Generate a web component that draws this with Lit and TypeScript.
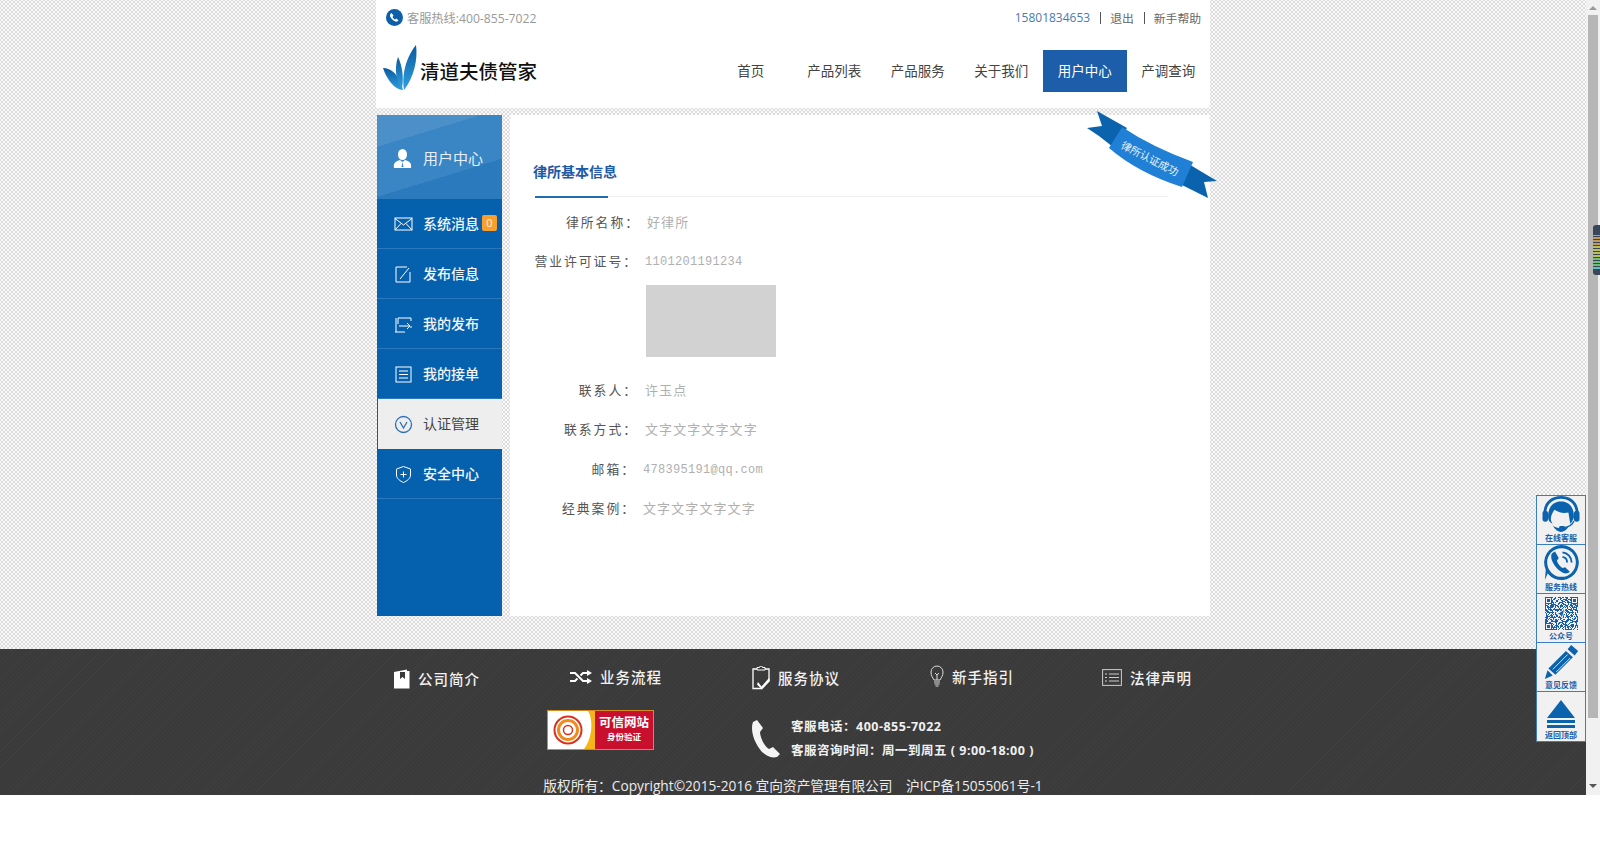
import { LitElement, html, css, svg } from 'lit';
import { customElement } from 'lit/decorators.js';

const SANS = css`"Open Sans", "Noto Sans CJK SC", sans-serif`;

const menuIcons = {
  mail: svg`<rect x="1" y="3" width="17" height="12" fill="none" stroke="#fff" stroke-width="1"/><path d="M1 3.500l8.500 6.500L18 3.500M1 15l6-6.500M18 15l-6-6.500" fill="none" stroke="#fff"/>`,
  edit: svg`<path d="M13 2H2v15h14V7" fill="none" stroke="#fff"/><path d="M6 14L15 3" stroke="#fff"/>`,
  send: svg`<path d="M4 9V3h13v3M17 11v2M1 17h10M2 3v14" fill="none" stroke="#fff"/><path d="M5 11h11M13 8l3 3-3 3" fill="none" stroke="#fff"/>`,
  list: svg`<rect x="2" y="2" width="15" height="15" fill="none" stroke="#fff"/><path d="M5 6h9M5 9.500h9M5 13h9" stroke="#fff"/>`,
  verify: svg`<circle cx="9.500" cy="9.500" r="8" fill="none" stroke="#2b6fb3" stroke-width="1.300"/><path d="M6 7l3.500 6L13 7" fill="none" stroke="#2b6fb3" stroke-width="1.300"/>`,
  shield: svg`<path d="M9.500 1.500l7 2.500v6c0 3.500-3.500 6-7 7.500-3.500-1.500-7-4-7-7.500V4z" fill="none" stroke="#fff"/><path d="M9.500 6.500v6M6.500 9.500h6" stroke="#fff"/>`,
};

const menu = [
  { name: '系统消息', icon: menuIcons.mail, badge: '0' },
  { name: '发布信息', icon: menuIcons.edit },
  { name: '我的发布', icon: menuIcons.send },
  { name: '我的接单', icon: menuIcons.list },
  { name: '认证管理', icon: menuIcons.verify, active: true },
  { name: '安全中心', icon: menuIcons.shield },
];

const nav = ['首页', '产品列表', '产品服务', '关于我们', '用户中心', '产调查询'];

// shift keeps the slightly uneven left edge of the original form
const rows = [
  { label: '律所名称：', value: '好律所', shift: 2 },
  { label: '营业许可证号：', value: '1101201191234', shift: 0, mono: true, image: true },
  { label: '联系人：', value: '许玉点', shift: 0 },
  { label: '联系方式：', value: '文字文字文字文字', shift: 0 },
  { label: '邮箱：', value: '478395191@qq.com', shift: -2, mono: true },
  { label: '经典案例：', value: '文字文字文字文字', shift: -2 },
];

const footerLinks = [
  {
    name: '公司简介',
    w: 17,
    h: 20,
    icon: svg`<path d="M1 3l13-2.500V2h2.500v17.500H1z" fill="#fff"/><path d="M7 3v7l2.500-2L12 10V3z" fill="#3a3a3a"/>`,
  },
  {
    name: '业务流程',
    w: 22,
    h: 14,
    icon: svg`<path d="M0 3h5l8 8h5M0 11h5l2.500-2.500M10.500 5.500L13 3h5" fill="none" stroke="#fff" stroke-width="2"/><path d="M17 0l5 3-5 3zM17 8l5 3-5 3z" fill="#fff"/>`,
  },
  {
    name: '服务协议',
    w: 18,
    h: 24,
    icon: svg`<path d="M5 3H1v19.500h9M13 3h4v11" fill="none" stroke="#fff" stroke-width="1.300"/><path d="M5 4V1.500h2.500a1.500 1.500 0 0 1 3 0H13V4z" fill="none" stroke="#fff"/><path d="M6 16l3.500 4.500L17 12l1 3-8 8.500-5-5z" fill="#fff"/>`,
  },
  {
    name: '新手指引',
    w: 14,
    h: 23,
    icon: svg`<path d="M4 15C2.500 12 1 11 1 7a6 6 0 0 1 12 0c0 4-1.500 5-3 8z" fill="none" stroke="#ddd"/><path d="M5 8l2 2 2-2M7 10v5M4 17h6M4.500 19h5M5.500 21h3" fill="none" stroke="#ddd"/>`,
  },
  {
    name: '法律声明',
    w: 20,
    h: 17,
    icon: svg`<rect x=".6" y=".6" width="18.800" height="15.800" fill="none" stroke="#ccc"/><path d="M3 5h2M7 5h10M3 8.500h2M7 8.500h10M3 12h2M7 12h10" stroke="#ccc"/>`,
  },
];

// fake qr modules, only the look of the block matters
const qrCells = () => {
  const cells = [];
  const finder = (x: number, y: number) =>
    (x < 7 && y < 7) || (x > 25 && y < 7) || (x < 7 && y > 25);
  for (let y = 0; y < 33; y++) {
    for (let x = 0; x < 33; x++) {
      if (finder(x, y)) continue;
      if ((x * 7 + y * 13 + ((x * y) % 5) * 3 + ((x ^ y) % 3)) % 5 < 3) {
        cells.push(svg`<rect x=${x} y=${y} width="1" height="1"/>`);
      }
    }
  }
  return cells;
};

const finderMark = (x: number, y: number) => svg`
  <rect x=${x + 0.5} y=${y + 0.5} width="6" height="6" fill="none" stroke="#1a5ea8"/>
  <rect x=${x + 2} y=${y + 2} width="3" height="3"/>`;

const sideTools = [
  {
    name: '在线客服',
    icon: svg`<svg class="tool-icon" viewBox="0 0 40 40" width="40" height="37" fill="#0b62ad">
      <path d="M1 20C1 8 9 1 20 1s19 7 19 19h-3C36 10 29 4 20 4S4 10 4 20z"/>
      <rect x="0" y="17" width="6" height="12" rx="3"/><rect x="34" y="17" width="6" height="12" rx="3"/>
      <path d="M6 24C6 12 12 7 20 7s14 5 14 17c-1 3-2 5-4 7l-2-12c-6 1-11 0-15-3-2 3-4 6-4 10 0 2 1 4 2 5-3-1-5-4-5-7z"/>
      <path d="M11 33c5 4 13 4 18 0-3 5-6 7-9 7s-6-2-9-7z"/>
      <path d="M34 28c-2 5-6 7-12 7" fill="none" stroke="#0b62ad" stroke-width="1.500"/>
      <rect x="18" y="33.500" width="6" height="3" rx="1.500"/>
    </svg>`,
  },
  {
    name: '服务热线',
    icon: svg`<svg class="tool-icon" viewBox="0 0 40 40" width="37" height="37" fill="#0b62ad">
      <path d="M20 1a19 19 0 1 1-15 31L2 39l1-11A19 19 0 0 1 20 1z"/>
      <circle cx="20" cy="20" r="15.500" fill="#f1f1f1"/>
      <path d="M13 8l4 7-2 3c1 3 3 6 6 8l3-1 5 5c-3 3-7 2-11-1-6-5-10-12-9-17 0-2 2-3 4-4z"/>
      <path d="M21 9a11 11 0 0 1 10 11M21 14a6 6 0 0 1 5 6" fill="none" stroke="#0b62ad" stroke-width="2"/>
    </svg>`,
  },
  {
    name: '公众号',
    icon: svg`<svg class="tool-icon" viewBox="0 0 33 33" width="33" height="33" fill="#1a5ea8">
      ${qrCells()}${finderMark(0, 0)}${finderMark(26, 0)}${finderMark(0, 26)}
      <path d="M20 12l-3 9-2-3-3-1z" fill="#1a5ea8" stroke="#f1f1f1"/>
    </svg>`,
  },
  {
    name: '意见反馈',
    icon: svg`<svg class="tool-icon" viewBox="0 0 40 40" width="35" height="35" fill="#0b62ad">
      <path d="M31 1l8 7-4 5-8-7zM25 8l8 7-20 20-8-7z"/>
      <path d="M4 30l6 6-9 4z"/>
      <path d="M10 29l17-17M14 32l16-16" stroke="#f1f1f1" stroke-width="1"/>
    </svg>`,
  },
  {
    name: '返回顶部',
    icon: svg`<svg class="tool-icon" viewBox="0 0 30 30" width="30" height="30" fill="#0b62ad">
      <path d="M15 1l14 18H1z"/><rect x="1" y="21" width="28" height="3"/><rect x="1" y="26" width="28" height="3"/>
    </svg>`,
  },
];

@customElement('app-root')
export class AppRoot extends LitElement {
  static styles = css`
    :host {
      display: block;
      height: 866px;
      background: #fff;
      overflow: hidden;
      font-family: ${SANS};
    }
    .shell {
      display: flex;
      height: 795px;
      position: relative;
    }
    .page {
      flex: 1;
      min-width: 0;
      overflow: hidden;
      background: radial-gradient(#dcdcdc 0.8px, transparent 1.1px) 0 0 / 4px 4px,
        radial-gradient(#dcdcdc 0.8px, transparent 1.1px) 2px 2px / 4px 4px, #fafafa;
    }
    .scrollbar {
      width: 14px;
      background: #f1f1f1;
      position: relative;
    }
    .thumb {
      position: absolute;
      left: 2px;
      width: 10px;
      top: 15px;
      height: 703px;
      background: #b6b6b6;
    }
    .arrow {
      position: absolute;
      left: 3px;
      width: 0;
      height: 0;
      border-left: 4px solid transparent;
      border-right: 4px solid transparent;
    }
    .arrow.up {
      top: 6px;
      border-bottom: 4px solid #999;
    }
    .arrow.down {
      bottom: 7px;
      border-top: 4px solid #555;
    }
    .meter {
      position: absolute;
      top: 225px;
      right: 0;
      width: 7px;
      height: 50px;
      border-radius: 3px 0 0 3px;
      background: repeating-linear-gradient(#0000 0 2px, #3c4656 2px 3px),
        linear-gradient(#39475c 0 20%, #c09a5a 20% 40%, #b9c05a 40% 65%, #6cc07a 65% 85%, #5cc0c8 85% 90%, #39475c 90%);
    }

    .wrap {
      width: 834px;
      margin: 0 auto;
    }
    .header {
      height: 108px;
      background: #fff;
    }
    .topbar {
      display: flex;
      justify-content: space-between;
      align-items: center;
      height: 35px;
      padding: 0 9px 0 10px;
      font-size: 12.200px;
      color: #999;
    }
    .hotline {
      display: flex;
      align-items: center;
      gap: 4px;
    }
    .account {
      display: flex;
      align-items: center;
      color: #666;
      font-size: 11.800px;
    }
    .account .phone {
      color: #4a7bb0;
      font-size: 12px;
    }
    .account .sep {
      width: 1px;
      height: 12px;
      background: #555;
      margin: 0 9px 0 10px;
    }
    .brand-row {
      display: flex;
      justify-content: space-between;
      align-items: flex-start;
      padding-left: 6px;
    }
    .logo {
      display: flex;
      align-items: center;
      padding-top: 5px;
      gap: 2px;
      color: #111;
      font-size: 19.500px;
      font-weight: 500;
      line-height: 46px;
    }
    .logo span {
      margin-top: 9px;
    }
    .nav {
      display: flex;
      margin-top: 15px;
    }
    .nav a {
      width: 83.500px;
      height: 42px;
      line-height: 42px;
      text-align: center;
      font-size: 13.500px;
      color: #444;
    }
    .nav a.active {
      background: #1c5ea9;
      color: #fff;
    }

    .body {
      display: flex;
      gap: 8px;
      margin-top: 7px;
      padding-left: 1px;
      height: 501px;
    }
    .sidebar {
      width: 125px;
      background: #0560ad;
      flex: none;
    }
    .side-head {
      height: 84px;
      display: flex;
      align-items: center;
      gap: 11px;
      padding-left: 16px;
      box-sizing: border-box;
      color: #e6f0f8;
      font-size: 15px;
      background: linear-gradient(163deg, #4c90ca 0 26%, #3a85c4 26% 67%, #2a7abd 67%);
    }
    .side-head svg {
      margin-top: 3px;
    }
    .side-item {
      height: 50px;
      box-sizing: border-box;
      border-bottom: 1px solid #2a78bd;
      display: flex;
      align-items: center;
      gap: 10px;
      padding: 0 0 2px 17px;
      color: #f2f6fa;
      font-size: 14px;
      font-weight: 500;
    }
    .side-item svg {
      margin-top: 3px;
    }
    .side-item.active {
      background: #eeeeee;
      color: #444;
      margin-left: 1px;
      padding-left: 16px;
      border-bottom: none;
      font-weight: 400;
    }
    .badge {
      width: 15px;
      height: 16px;
      line-height: 16px;
      margin-left: -7px;
      background: #f9a02c;
      border-radius: 2px;
      text-align: center;
      font-size: 11px;
      font-weight: 400;
    }

    .main {
      flex: 1;
      position: relative;
      background: #fff;
    }
    .ribbon {
      position: absolute;
      top: -7px;
      right: -10px;
    }
    .title-line {
      margin: 45px 42px 0 25px;
      height: 36px;
      border-bottom: 1px solid #eeeeee;
    }
    .title {
      display: inline-block;
      box-sizing: border-box;
      width: 73px;
      height: 36px;
      border-bottom: 2px solid #1f6cb0;
      white-space: nowrap;
      font-size: 14px;
      line-height: 20px;
      font-weight: 700;
      color: #1f5aa8;
    }
    .title span {
      margin-left: -2px;
    }
    .form {
      padding-top: 12px;
      font-family: "Liberation Serif", "Noto Sans CJK SC", serif;
      letter-spacing: 2px;
    }
    .row {
      display: flex;
      align-items: center;
      height: 24px;
      margin-bottom: 15.300px;
      font-size: 13px;
    }
    .row label {
      width: 128px;
      text-align: right;
      color: #555;
      flex: none;
      font-size: 12.800px;
    }
    .row .value {
      margin-left: 7px;
      color: #b0b0b0;
      font-size: 13px;
      letter-spacing: 1.100px;
    }
    .row .value.mono {
      font-family: "Liberation Mono", monospace;
      font-size: 12px;
      letter-spacing: 0.300px;
      margin-top: 3px;
    }
    .license {
      width: 130px;
      height: 72px;
      margin: -2.600px 0 20.600px 136px;
      background: #d2d2d2;
    }

    .footer {
      margin-top: 33px;
      height: 146px;
      color: #fff;
      overflow: hidden;
      background: repeating-linear-gradient(135deg, #3e3e3e 0 1px, #3a3a3a 1px 3px);
    }
    .links {
      display: grid;
      grid-template-columns: 177px 182px 178px 172px auto;
      height: 59px;
      align-items: center;
      padding-left: 17px;
    }
    .link {
      display: flex;
      align-items: center;
      gap: 8px;
      font-size: 14.500px;
      font-weight: 500;
      letter-spacing: 1px;
      color: #f2f2f2;
    }
    .link:nth-child(2),
    .link:nth-child(4) {
      margin-top: -4px;
    }
    .link:nth-child(3),
    .link:nth-child(5) {
      margin-top: -2px;
    }
    .service {
      display: flex;
      padding: 2px 0 0 171px;
    }
    .trust {
      width: 107px;
      height: 40px;
      box-sizing: border-box;
      display: flex;
      border: 1px solid #d98a1c;
      background: #c8102e;
      overflow: hidden;
      position: relative;
    }
    .trust svg {
      flex: none;
    }
    .trust-text {
      flex: 1;
      text-align: center;
      line-height: 1;
      padding-top: 6px;
      font-size: 12.500px;
      font-weight: 700;
    }
    .trust-text small {
      display: block;
      margin-top: 3px;
      font-size: 8.500px;
    }
    .contact {
      display: flex;
      margin-left: 98px;
      padding-top: 10px;
      gap: 10px;
    }
    .contact-lines {
      margin-top: -5px;
      font-size: 12.500px;
      font-weight: 700;
      line-height: 24px;
      letter-spacing: 0.500px;
      color: #f0f0f0;
    }
    .copyright {
      text-align: center;
      margin-top: 13px;
      font-size: 13.700px;
      line-height: 20px;
      color: #ececec;
    }
    .copyright span {
      margin-left: 10px;
    }

    .tools {
      position: absolute;
      left: 1536px;
      top: 495px;
      width: 50px;
      box-sizing: border-box;
      border: 1px solid #3a7ebf;
      background: #f1f1f1;
    }
    .tool {
      height: 49px;
      box-sizing: border-box;
      border-bottom: 1px solid #3a7ebf;
      padding-bottom: 1px;
      display: flex;
      flex-direction: column;
      align-items: center;
      justify-content: flex-end;
      font-size: 8px;
      line-height: 11px;
      font-weight: 700;
      color: #1a5ea8;
    }
    .tool:last-child {
      border-bottom: none;
    }
    .tool-icon {
      flex: none;
    }
  `;

  render() {
    return html`
      <div class="shell">
        <div class="page">
          <div class="wrap">
            ${this.renderHeader()}
            <div class="body">
              ${this.renderSidebar()}
              <div class="main">
                ${this.renderRibbon()}
                <div class="title-line"><div class="title"><span>律所基本信息</span></div></div>
                <div class="form">
                  ${rows.map(
                    (r) => html`
                      <div class="row" style="margin-left:${r.shift}px">
                        <label>${r.label}</label>
                        <span class="value ${r.mono ? 'mono' : ''}">${r.value}</span>
                      </div>
                      ${r.image ? html`<div class="license"></div>` : ''}
                    `
                  )}
                </div>
              </div>
            </div>
          </div>
          ${this.renderFooter()}
        </div>
        <div class="scrollbar">
          <div class="arrow up"></div>
          <div class="thumb"></div>
          <div class="meter"></div>
          <div class="arrow down"></div>
        </div>
        <div class="tools">
          ${sideTools.map((t) => html`<div class="tool">${t.icon}<span>${t.name}</span></div>`)}
        </div>
      </div>
    `;
  }

  renderHeader() {
    return html`
      <div class="header">
        <div class="topbar">
          <div class="hotline">
            <svg width="17" height="17" viewBox="0 0 17 17">
              <circle cx="8.500" cy="8.500" r="8.500" fill="#0f5fa8" />
              <path d="M5.500 4l2 2.500-1 1.500c.5 1 1.500 2 2.500 2.500l1.500-1 2 2c-1 1.500-3 1.500-5 0-2-1.500-3.500-3.500-3.500-5 0-1 .7-2 1.500-2.500z" fill="#fff" />
            </svg>
            客服热线:400-855-7022
          </div>
          <div class="account">
            <span class="phone">15801834653</span><i class="sep"></i>退出<i class="sep"></i>新手帮助
          </div>
        </div>
        <div class="brand-row">
          <div class="logo">
            <svg width="36" height="46" viewBox="0 0 36 46">
              <defs>
                <linearGradient id="leaf" x1="0" y1="0" x2="0" y2="1">
                  <stop offset="0" stop-color="#0c5a9e" />
                  <stop offset="1" stop-color="#2ea0e0" />
                </linearGradient>
              </defs>
              <path d="M1 23c8 0 16 6 20 22C13 45 5 35 1 23z" fill="url(#leaf)" />
              <path d="M16 12c4 8 6 20 4 31-6-6-8-20-4-31z" fill="url(#leaf)" />
              <path d="M34 0c2 14-2 32-12 45-2-12 0-30 12-45z" fill="url(#leaf)" />
            </svg>
            <span>清道夫债管家</span>
          </div>
          <div class="nav">
            ${nav.map((n) => html`<a class=${n === '用户中心' ? 'active' : ''}>${n}</a>`)}
          </div>
        </div>
      </div>
    `;
  }

  renderSidebar() {
    return html`
      <div class="sidebar">
        <div class="side-head">
          <svg width="19" height="19" viewBox="0 0 19 19">
            <ellipse cx="9.500" cy="5.500" rx="4.500" ry="5.500" fill="#fff" />
            <path d="M1 19c-1-5 2-7 6-8l2.500 2 2.500-2c4 1 7 3 6 8z" fill="#fff" />
            <path d="M9.500 13l-1 5h2z" fill="#3a85c4" />
          </svg>
          用户中心
        </div>
        ${menu.map(
          (m) => html`
            <div class="side-item ${m.active ? 'active' : ''}">
              <svg width="19" height="19" viewBox="0 0 19 19">${m.icon}</svg>
              ${m.name} ${m.badge ? html`<span class="badge">${m.badge}</span>` : ''}
            </div>
          `
        )}
      </div>
    `;
  }

  renderRibbon() {
    return html`
      <svg class="ribbon" width="136" height="92" viewBox="1084 108 136 92">
        <path d="M1097 111l30 17-14 19-14-11-12-8 15-2z" fill="#0b62ad" />
        <path d="M1187 163l30 18-13 1 4 16-26-13z" fill="#0b62ad" />
        <path d="M1122 127q30 20 71 35l-11 25q-44-14-73-39z" fill="#1f80d6" />
        <text
          x="0"
          y="0"
          transform="translate(1148 162) rotate(27)"
          text-anchor="middle"
          font-size="10.500"
          fill="#e8f3fc"
          font-family="Noto Sans CJK SC, sans-serif"
        >律所认证成功</text>
      </svg>
    `;
  }

  renderFooter() {
    return html`
      <div class="footer">
        <div class="wrap">
          <div class="links">
            ${footerLinks.map(
              (l) => html`
                <div class="link">
                  <svg width=${l.w} height=${l.h} viewBox="0 0 ${l.w} ${l.h}">${l.icon}</svg>
                  ${l.name}
                </div>
              `
            )}
          </div>
          <div class="service">
            <div class="trust">
              <svg width="47" height="38" viewBox="0 0 47 38">
                <rect width="47" height="38" fill="#f6b417" />
                <path d="M0 0h40c5 8 5 26-4 38H0z" fill="#fff" />
                <circle cx="20" cy="19" r="13.500" fill="none" stroke="#d8321e" stroke-width="2" />
                <circle cx="20" cy="19" r="9.500" fill="none" stroke="#ef8a1d" stroke-width="3" />
                <circle cx="20" cy="19" r="4.500" fill="none" stroke="#d8321e" stroke-width="1.500" />
              </svg>
              <div class="trust-text">可信网站<small>身份验证</small></div>
            </div>
            <div class="contact">
              <svg width="29" height="38" viewBox="0 0 29 38">
                <path d="M5 0l6 8-3 4c0 5 4 14 9 17l4-2 7 7-3 3C16 39 9 33 4 23 0 15-1 7 1 2z" fill="#f4f4f4" />
              </svg>
              <div class="contact-lines">
                <div>客服电话：400-855-7022</div>
                <div>客服咨询时间：周一到周五 ( 9:00-18:00 )</div>
              </div>
            </div>
          </div>
          <div class="copyright">版权所有：Copyright©2015-2016 宜向资产管理有限公司 <span>沪ICP备15055061号-1</span></div>
        </div>
      </div>
    `;
  }
}
